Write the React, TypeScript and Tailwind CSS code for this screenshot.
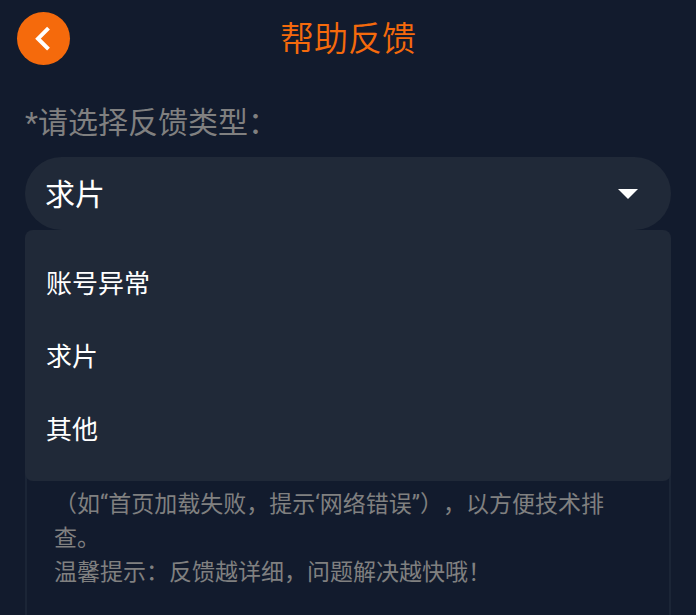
import { useState } from "react";

const feedbackTypes = ["账号异常", "求片", "其他"];

const hint =
  "（如“首页加载失败，提示‘网络错误”），以方便技术排查。\n温馨提示：反馈越详细，问题解决越快哦！";

function Header() {
  return (
    <header className="grid h-[76px] grid-cols-[1fr_auto_1fr] items-center px-[17px]">
      <button
        type="button"
        aria-label="返回"
        className="flex size-[53px] items-center justify-center rounded-full bg-[#f56a0c] text-white"
      >
        <svg viewBox="0 0 53 53" className="size-full" fill="none" aria-hidden="true">
          <path d="M31.5 16.2 L21 26.7 L31.5 37.2" stroke="currentColor" strokeWidth="4" />
        </svg>
      </button>
      <h1 className="pt-0.5 text-[34px] leading-[48px] font-[350] text-[#f56a0c]">帮助反馈</h1>
    </header>
  );
}

export default function App() {
  const [type, setType] = useState("求片");

  return (
    <main className="h-screen overflow-hidden bg-[#121b2d] font-[Roboto,'Noto_Sans_CJK_SC',sans-serif] [text-spacing-trim:space-all]">
      <Header />
      <form className="px-[25px] pt-6">
        <label htmlFor="type" className="block pt-px text-[30px] leading-[44px] text-[#808080]">
          *请选择反馈类型：
        </label>
        <div className="relative mt-3">
          <select
            id="type"
            value={type}
            onChange={(e) => setType(e.target.value)}
            className="block h-[73px] w-full appearance-none rounded-full bg-[#202938] px-5 pt-0.5 text-[30px] text-white outline-none"
          >
            {feedbackTypes.map((t) => (
              <option key={t}>{t}</option>
            ))}
          </select>
          <svg
            viewBox="0 0 20 10"
            className="pointer-events-none absolute top-8 right-[33px] h-[10px] w-5 fill-white"
            aria-hidden="true"
          >
            <path d="M0 0H20L10 10Z" />
          </svg>
          <ul
            role="listbox"
            aria-label="反馈类型"
            className="absolute inset-x-0 top-full rounded-lg bg-[#202938] pt-[18px] pb-[14px] text-[26px] text-white"
          >
            {feedbackTypes.map((t) => (
              <li
                key={t}
                role="option"
                aria-selected={t === type}
                onClick={() => setType(t)}
                className="flex h-[73px] items-center px-[21px]"
              >
                {t}
              </li>
            ))}
          </ul>
        </div>
        <textarea
          aria-label="反馈内容"
          placeholder={hint}
          className="mt-10 block h-[480px] w-full resize-none rounded-lg border-2 border-[#1b2536] bg-transparent px-[27px] pt-[216px] text-[23px] leading-[34px] text-white outline-none placeholder:text-[#808080]"
        />
      </form>
    </main>
  );
}
